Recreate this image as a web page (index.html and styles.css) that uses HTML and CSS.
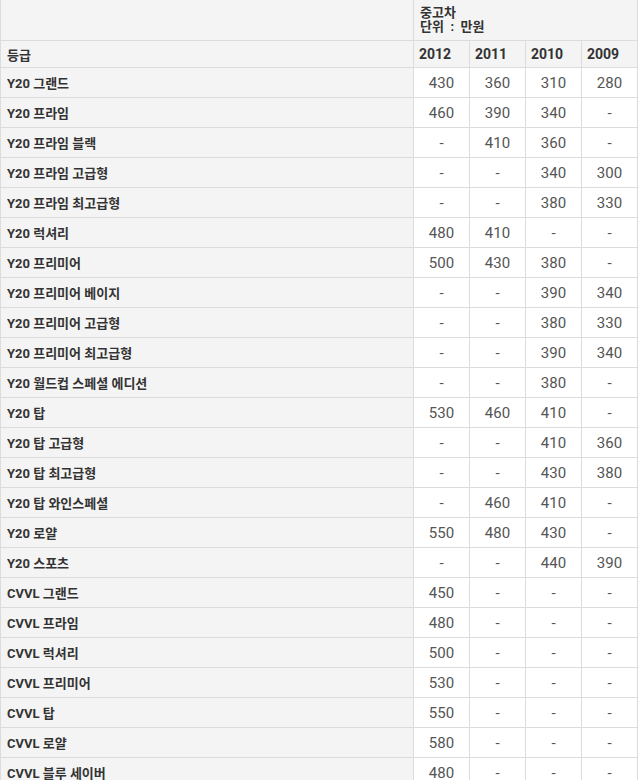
FILE: index.html
```html
<!DOCTYPE html>
<html lang="ko">
<head>
<meta charset="utf-8">
<link rel="stylesheet" href="styles.css">
</head>
<body>
<table class="price">
  <colgroup>
    <col class="c-name"><col class="c-yr"><col class="c-yr"><col class="c-yr"><col class="c-yr">
  </colgroup>
  <thead>
    <tr class="h1">
      <th class="blank"></th>
      <th class="group" colspan="4">중고차<br>단위 &nbsp;: &nbsp;만원</th>
    </tr>
    <tr class="h2">
      <th class="label">등급</th>
      <th class="yr">2012</th>
      <th class="yr">2011</th>
      <th class="yr">2010</th>
      <th class="yr">2009</th>
    </tr>
  </thead>
  <tbody>
    <tr><th class="label">Y20 그랜드</th><td>430</td><td>360</td><td>310</td><td>280</td></tr>
    <tr><th class="label">Y20 프라임</th><td>460</td><td>390</td><td>340</td><td>-</td></tr>
    <tr><th class="label">Y20 프라임 블랙</th><td>-</td><td>410</td><td>360</td><td>-</td></tr>
    <tr><th class="label">Y20 프라임 고급형</th><td>-</td><td>-</td><td>340</td><td>300</td></tr>
    <tr><th class="label">Y20 프라임 최고급형</th><td>-</td><td>-</td><td>380</td><td>330</td></tr>
    <tr><th class="label">Y20 럭셔리</th><td>480</td><td>410</td><td>-</td><td>-</td></tr>
    <tr><th class="label">Y20 프리미어</th><td>500</td><td>430</td><td>380</td><td>-</td></tr>
    <tr><th class="label">Y20 프리미어 베이지</th><td>-</td><td>-</td><td>390</td><td>340</td></tr>
    <tr><th class="label">Y20 프리미어 고급형</th><td>-</td><td>-</td><td>380</td><td>330</td></tr>
    <tr><th class="label">Y20 프리미어 최고급형</th><td>-</td><td>-</td><td>390</td><td>340</td></tr>
    <tr><th class="label">Y20 월드컵 스페셜 에디션</th><td>-</td><td>-</td><td>380</td><td>-</td></tr>
    <tr><th class="label">Y20 탑</th><td>530</td><td>460</td><td>410</td><td>-</td></tr>
    <tr><th class="label">Y20 탑 고급형</th><td>-</td><td>-</td><td>410</td><td>360</td></tr>
    <tr><th class="label">Y20 탑 최고급형</th><td>-</td><td>-</td><td>430</td><td>380</td></tr>
    <tr><th class="label">Y20 탑 와인스페셜</th><td>-</td><td>460</td><td>410</td><td>-</td></tr>
    <tr><th class="label">Y20 로얄</th><td>550</td><td>480</td><td>430</td><td>-</td></tr>
    <tr><th class="label">Y20 스포츠</th><td>-</td><td>-</td><td>440</td><td>390</td></tr>
    <tr><th class="label">CVVL 그랜드</th><td>450</td><td>-</td><td>-</td><td>-</td></tr>
    <tr><th class="label">CVVL 프라임</th><td>480</td><td>-</td><td>-</td><td>-</td></tr>
    <tr><th class="label">CVVL 럭셔리</th><td>500</td><td>-</td><td>-</td><td>-</td></tr>
    <tr><th class="label">CVVL 프리미어</th><td>530</td><td>-</td><td>-</td><td>-</td></tr>
    <tr><th class="label">CVVL 탑</th><td>550</td><td>-</td><td>-</td><td>-</td></tr>
    <tr><th class="label">CVVL 로얄</th><td>580</td><td>-</td><td>-</td><td>-</td></tr>
    <tr><th class="label">CVVL 블루 세이버</th><td>480</td><td>-</td><td>-</td><td>-</td></tr>
  </tbody>
</table>
</body>
</html>
```

FILE: styles.css
```css
html, body {
  margin: 0;
  padding: 0;
  background: #ffffff;
}

.price {
  border-collapse: collapse;
  table-layout: fixed;
  width: 638px;
  margin-top: -1px;
  font-family: Roboto, "Noto Sans CJK KR", sans-serif;
}

.c-name { width: 413px; }
.c-yr { width: 56px; }

.price th,
.price td {
  border: 1px solid #dcdcdc;
  padding: 0;
  vertical-align: middle;
}

.price th {
  background: #f4f4f4;
  color: #333333;
  font-family: Roboto, "Noto Sans CJK KR", sans-serif;
  font-size: 13px;
  font-weight: 700;
  text-align: left;
}

.price .h1 th {
  height: 40px;
}

.price .group {
  padding-left: 6px;
  line-height: 14px;
}

.price .h2 th {
  height: 26px;
}

.price .h2 .yr {
  padding-left: 5px;
  font-size: 14px;
}

.price .label {
  padding-left: 6px;
}

.price tbody th,
.price tbody td {
  height: 29px;
}

.price td {
  background: #ffffff;
  color: #555555;
  font-size: 15px;
  text-align: center;
}
```
